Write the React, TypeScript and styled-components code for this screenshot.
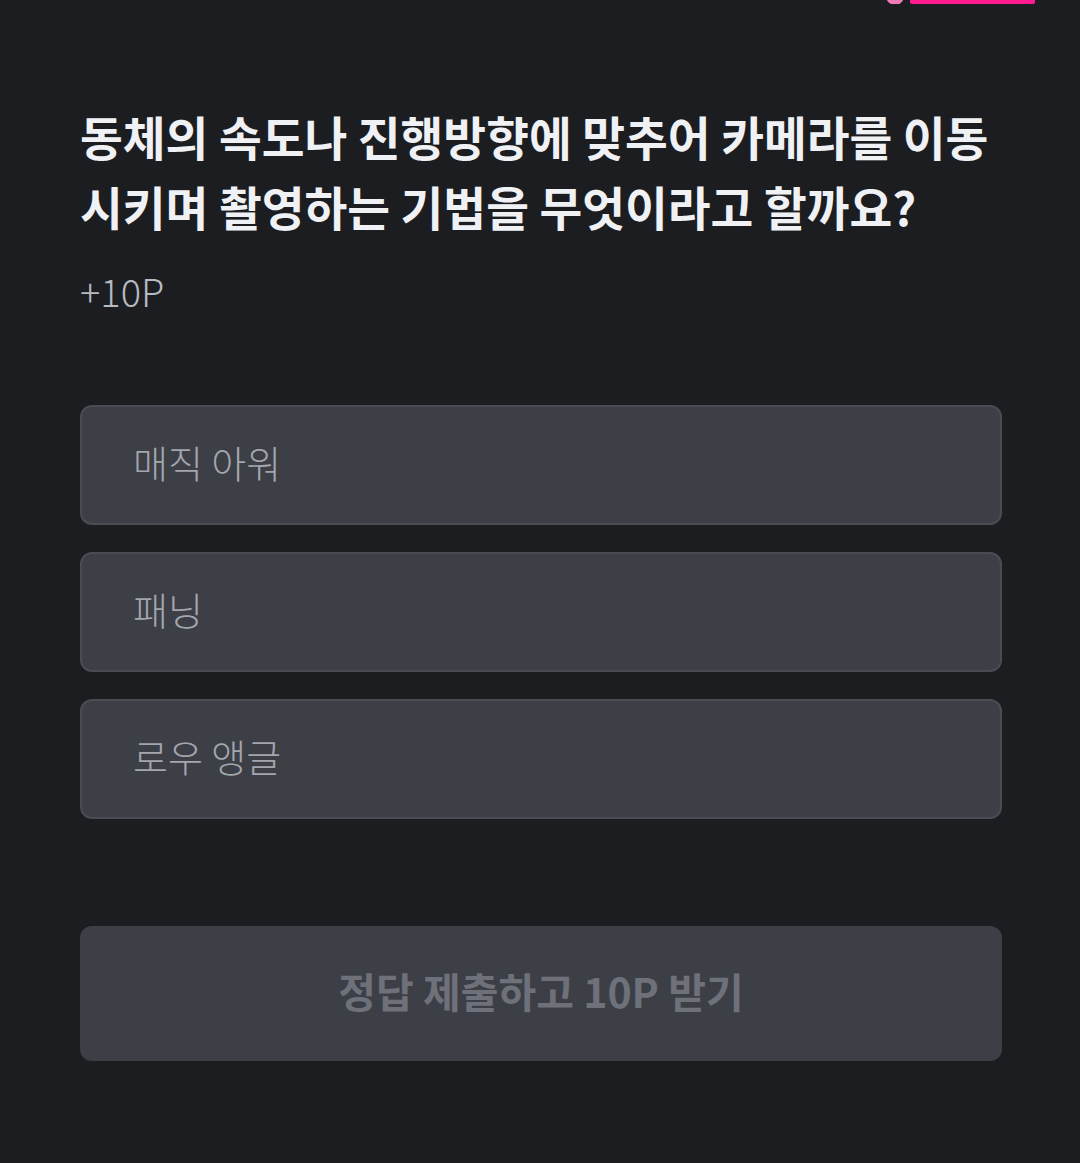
import React from "react";
import styled, { createGlobalStyle } from "styled-components";

const GlobalStyle = createGlobalStyle`
  html, body {
    margin: 0;
    padding: 0;
    background: #1c1d21;
  }
  body {
    font-family: "Noto Sans CJK KR", "Noto Sans", sans-serif;
  }
`;

const Page = styled.div`
  min-height: 1163px;
  background: #1c1d21;
  display: flex;
  flex-direction: column;
`;

const TopStrip = styled.div`
  height: 4px;
  display: flex;
  justify-content: flex-end;
  align-items: flex-end;
  gap: 6px;
  padding-right: 45px;
  overflow: hidden;
`;

const Dot = styled.div`
  width: 18px;
  height: 18px;
  border-radius: 50%;
  background: #f07ab8;
  margin-bottom: -1px;
`;

const Bar = styled.div`
  width: 125px;
  height: 4px;
  background: #ff1b8d;
  border-radius: 0 0 2px 2px;
`;

const Content = styled.main`
  padding: 97px 78px 0 80px;
  display: flex;
  flex-direction: column;
`;

const Question = styled.h1`
  margin: 0;
  font-size: 46.5px;
  font-weight: 700;
  line-height: 70px;
  color: #f0f1f4;
`;

const Reward = styled.div`
  margin-top: 25px;
  font-size: 38px;
  font-weight: 300;
  color: #b7bac0;
  line-height: 50px;
`;

const Options = styled.div`
  margin-top: 89px;
  display: flex;
  flex-direction: column;
  gap: 27px;
`;

const Option = styled.button`
  height: 120px;
  box-sizing: border-box;
  border: 2px solid #4a4c54;
  border-radius: 12px;
  background: #3d3f47;
  display: flex;
  align-items: center;
  padding: 0 0 8px 51px;
  font-family: inherit;
  font-size: 38px;
  font-weight: 300;
  color: #a3a6ad;
  text-align: left;
  cursor: pointer;
`;

const Submit = styled.button`
  margin-top: 107px;
  height: 135px;
  border: none;
  border-radius: 12px;
  background: #3d3f47;
  padding: 0 0 8px;
  font-family: inherit;
  font-size: 41px;
  font-weight: 700;
  color: #6e717a;
  display: flex;
  align-items: center;
  justify-content: center;
`;

const options = ["매직 아워", "패닝", "로우 앵글"];

export default function App() {
  return (
    <Page>
      <GlobalStyle />
      <TopStrip>
        <Dot />
        <Bar />
      </TopStrip>
      <Content>
        <Question>
          동체의 속도나 진행방향에 맞추어 카메라를 이동
          <br />
          시키며 촬영하는 기법을 무엇이라고 할까요?
        </Question>
        <Reward>+10P</Reward>
        <Options>
          {options.map((o) => (
            <Option key={o}>{o}</Option>
          ))}
        </Options>
        <Submit disabled>정답 제출하고 10P 받기</Submit>
      </Content>
    </Page>
  );
}
